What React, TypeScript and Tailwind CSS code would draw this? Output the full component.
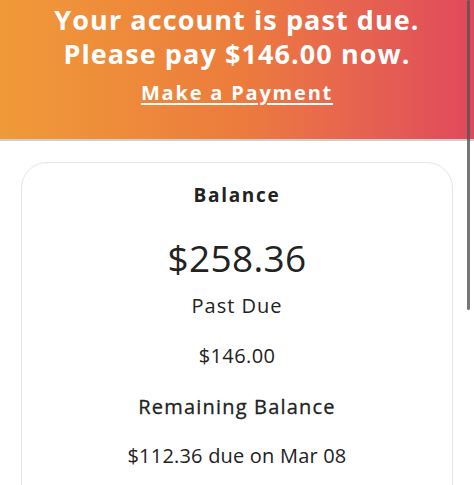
import React from "react";

const font = { fontFamily: '"Open Sans", "Noto Sans", sans-serif' };

export default function App() {
  return (
    <div className="relative w-[474px] h-[485px] overflow-hidden bg-white" style={font}>
      {/* banner */}
      <div className="h-[139px] bg-gradient-to-r from-[#f09a38] via-[#ec7c3c] to-[#e0485c] text-white text-center flex flex-col items-center pt-[3px]">
        <p className="text-[27px] leading-[34px] font-bold tracking-[0.04em]">Your account is past due.</p>
        <p className="text-[27px] leading-[34px] font-bold tracking-[0.04em]">Please pay $146.00 now.</p>
        <a className="mt-[10px] text-[20px] leading-[24px] font-bold tracking-[0.09em] underline underline-offset-[3px] decoration-2">
          Make a Payment
        </a>
      </div>
      <div className="h-[2px] bg-[#cfcfcf]" />

      {/* card */}
      <div className="px-[21px] pt-[21px]">
        <div className="h-[400px] rounded-[26px] border border-[#e6e6e6] flex flex-col items-center text-[#222] pt-[20px]">
          <p className="text-[19px] leading-[24px] font-bold tracking-[0.09em]">Balance</p>
          <p className="mt-[28px] text-[37px] leading-[46px] tracking-[0.01em]">$258.36</p>
          <p className="mt-[12px] text-[20px] leading-[26px] tracking-[0.05em]">Past Due</p>
          <p className="mt-[24px] text-[20px] leading-[26px] tracking-[0.02em]">$146.00</p>
          <p className="mt-[25px] text-[20px] leading-[26px] tracking-[0.06em] [-webkit-text-stroke:0.3px_#222]">
            Remaining Balance
          </p>
          <p className="mt-[23px] text-[20px] leading-[26px] tracking-[0.01em]">$112.36 due on Mar 08</p>
        </div>
      </div>

      {/* scrollbar */}
      <div className="absolute right-[4px] top-0 w-[3px] h-[310px] rounded-full bg-[#555]/80" />
    </div>
  );
}
